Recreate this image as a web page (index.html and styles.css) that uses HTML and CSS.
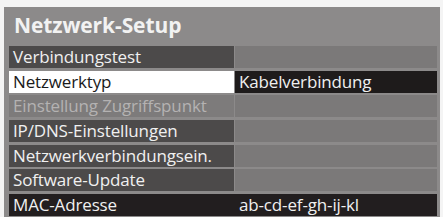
FILE: index.html
```html
<!DOCTYPE html>
<html lang="de">
<head>
<meta charset="utf-8">
<title>Netzwerk-Setup</title>
<link rel="stylesheet" href="styles.css">
</head>
<body>
<div class="panel">
  <div class="title">Netzwerk-Setup</div>
  <div class="menu">
    <div class="row"><div class="cell label">Verbindungstest</div><div class="cell value"></div></div>
    <div class="row active"><div class="cell label">Netzwerktyp</div><div class="cell value">Kabelverbindung</div></div>
    <div class="row disabled"><div class="cell label">Einstellung Zugriffspunkt</div><div class="cell value"></div></div>
    <div class="row"><div class="cell label">IP/DNS-Einstellungen</div><div class="cell value"></div></div>
    <div class="row"><div class="cell label">Netzwerkverbindungsein.</div><div class="cell value"></div></div>
    <div class="row"><div class="cell label">Software-Update</div><div class="cell value"></div></div>
    <div class="row info"><div class="cell label">MAC-Adresse</div><div class="cell value">ab-cd-ef-gh-ij-kl</div></div>
  </div>
</div>
</body>
</html>
```
FILE: styles.css
```css
html, body {
  margin: 0;
  padding: 0;
  background: #f4f4f4;
}
body {
  width: 443px;
  height: 217px;
  overflow: hidden;
  font-family: "Open Sans", "Noto Sans", sans-serif;
}
.panel {
  margin: 7px 3px 0 4px;
  height: 220px;
  background: #8c8a8a;
  padding: 0 3px 0 5px;
  box-sizing: border-box;
}
.title {
  height: 39px;
  padding-left: 5px;
  color: #f2f2f2;
  font-weight: 700;
  font-size: 21px;
  line-height: 36px;
  letter-spacing: -0.1px;
}
.menu {
  display: flex;
  flex-direction: column;
  gap: 2.67px;
}
.row {
  display: grid;
  grid-template-columns: 225px 202px;
  column-gap: 1px;
  height: 22px;
}
.cell {
  font-size: 17px;
  line-height: 22px;
  padding-left: 4px;
  white-space: nowrap;
  overflow: hidden;
  color: #f0f0f0;
  letter-spacing: -0.15px;
}
.label {
  background: #4c4a4a;
}
.value {
  background: #7b7979;
}
.active .label {
  background: #ffffff;
  color: #1a1a1a;
}
.active .value {
  background: #1e1b1b;
  color: #f0f0f0;
}
.disabled .label {
  background: #7d7b7b;
  color: #b4b2b2;
}
.info {
  column-gap: 0;
  grid-template-columns: 226px 202px;
}
.info .label, .info .value {
  background: #221e1f;
}
```
